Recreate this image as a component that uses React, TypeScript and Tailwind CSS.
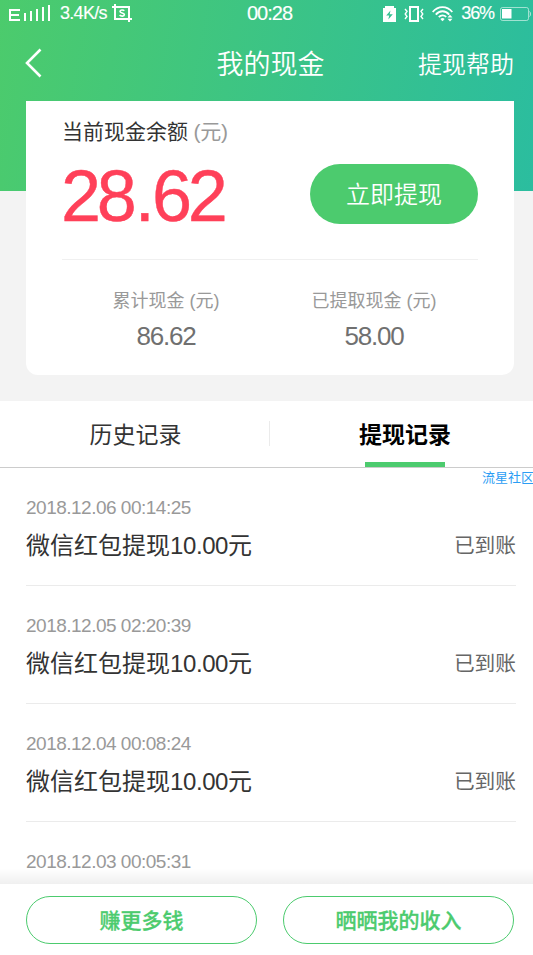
import { ReactNode } from "react";

type Entry = { time: string; title?: string; amount?: string; status?: string };

const records: Entry[] = [
  { time: "2018.12.06 00:14:25", title: "微信红包提现", amount: "10.00", status: "已到账" },
  { time: "2018.12.05 02:20:39", title: "微信红包提现", amount: "10.00", status: "已到账" },
  { time: "2018.12.04 00:08:24", title: "微信红包提现", amount: "10.00", status: "已到账" },
  { time: "2018.12.03 00:05:31" },
];

function SignalIcon() {
  return (
    <svg width="42" height="17" viewBox="0 0 42 17" shapeRendering="crispEdges">
      <path
        d="M11 5H1v10h10M1 10h9M16 16V8M22 16V6M28 16V4M34 16V2M40 16V0"
        fill="none"
        stroke="#fff"
        strokeWidth="2"
      />
    </svg>
  );
}

function CropIcon() {
  return (
    <svg width="20" height="19" viewBox="0 0 20 19" fill="none" stroke="#fff">
      <path d="M0 3h17v15M3 0v15h17" strokeWidth="2" />
      <path
        d="M12.300 6.800C11.300 5.600 8 5.600 8 7.500s4.400 1.100 4.400 3.100-3.600 1.900-4.800.5"
        strokeWidth="1.600"
      />
    </svg>
  );
}

function ChargeIcon() {
  return (
    <svg width="13" height="16" viewBox="0 0 13 16">
      <path d="M2 0h9v2h2v14H0V2h2z" fill="#fff" />
      <path d="M7.500 4.500 3.200 9.500h3L5.300 13.500 9.800 8.200H6.700z" fill="#35c192" />
    </svg>
  );
}

function VibrateIcon() {
  return (
    <svg width="20" height="16" viewBox="0 0 20 16" fill="none" stroke="#fff">
      <path d="M6 1h8v14H6z" strokeWidth="2" />
      <path
        d="M1 3l2 2.300L1.200 8 3 10.500 1 13M19 3l-2 2.300L18.800 8 17 10.500 19 13"
        strokeWidth="1.400"
      />
    </svg>
  );
}

function WifiIcon() {
  return (
    <svg width="22" height="16" viewBox="0 0 22 16" fill="none" stroke="#fff">
      <path
        d="M.7 6C6-.6 15-.6 20.300 6M3.800 8.600c3.700-4.500 9.700-4.500 13.400 0M6.800 11.200c2.200-2.500 5.200-2.500 7.400-.3"
        strokeWidth="1.800"
      />
      <path d="M8.300 13c1.500-1.200 2.900-1.200 4.400 0l-2.200 2.300z" fill="#fff" stroke="none" />
      <path d="M15.500 11.400h5L18 8.800zM15.500 12.800h5L18 15.400z" fill="#fff" stroke="none" />
    </svg>
  );
}

function BatteryIcon() {
  return (
    <svg width="31" height="14" viewBox="0 0 31 14">
      <rect x=".5" y=".5" width="28" height="13" rx="2" fill="none" stroke="#fff" strokeOpacity=".55" />
      <path d="M29.500 4.500c1.200.8 1.200 4.200 0 5" fill="none" stroke="#fff" strokeOpacity=".7" />
      <path d="M2 2h9.500v9.500H2z" fill="#fff" />
    </svg>
  );
}

function StatusBar() {
  return (
    <div className="relative flex h-[27px] items-center justify-between pl-[9px] pr-0.5 text-lg leading-[27px]">
      <div className="flex items-center">
        <SignalIcon />
        <span className="ml-[9px] tracking-[-0.7px] [-webkit-text-stroke:0.15px]">3.4K/s</span>
        <span className="ml-[5px]">
          <CropIcon />
        </span>
      </div>
      <span className="absolute left-[247px] top-0 text-xl leading-[27px] tracking-[-1px] [-webkit-text-stroke:0.15px]">
        00:28
      </span>
      <div className="flex items-center">
        <ChargeIcon />
        <span className="ml-2">
          <VibrateIcon />
        </span>
        <span className="ml-2">
          <WifiIcon />
        </span>
        <span className="ml-[7px] mr-1.5 tracking-[-1.1px] [-webkit-text-stroke:0.15px]">36%</span>
        <BatteryIcon />
      </div>
    </div>
  );
}

function Total({ label, value }: { label: string; value: string }) {
  return (
    <div className="flex flex-1 flex-col items-center">
      <span className="text-lg leading-6 text-[#999]">{label}</span>
      <span className="mt-[3px] text-[26px] leading-10 tracking-[-1.2px] text-[#707070]">{value}</span>
    </div>
  );
}

function OutlineButton({ children }: { children: ReactNode }) {
  return (
    <button className="h-12 flex-1 rounded-full border border-[#4ccb6e] pt-0.5 text-[21px] font-medium leading-8 text-[#4ccb6e] [-webkit-text-stroke:0.3px]">
      {children}
    </button>
  );
}

export default function App() {
  return (
    <div className="relative flex h-[955px] w-[533px] flex-col overflow-hidden bg-white font-['Liberation_Sans','Noto_Sans_CJK_SC',sans-serif] text-[#333]">
      <section className="h-[401px] shrink-0 bg-[#f3f3f3]">
        <header className="h-[191px] bg-[linear-gradient(100deg,#4ccb6c_0%,#2bbd9f_100%)] text-white">
          <StatusBar />
          <div className="grid h-[74px] grid-cols-3 items-center pl-[25px] pr-[19px]">
            <svg className="mb-0.5" width="18" height="30" viewBox="0 0 18 30" fill="none" stroke="#fff">
              <path d="M15.500 1.500 2 15l13.500 13.500" strokeWidth="2.600" />
            </svg>
            <h1 className="whitespace-nowrap pt-[3px] pl-0.5 text-center text-[27px] font-[350]">我的现金</h1>
            <span className="pt-0.5 text-right text-2xl font-[350]">提现帮助</span>
          </div>
        </header>

        {/* balance card */}
        <div className="relative ml-[26px] -mt-[90px] mr-[19px] h-[274px] rounded-b-xl bg-white px-9">
          <div className="flex h-[158px] items-start justify-between">
            <div>
              <p className="pt-[15px] text-[21px] leading-8">
                当前现金余额<span className="tracking-[-0.3px] text-[#999]"> (元)</span>
              </p>
              <p className="-ml-px mt-[13px] text-[72px] leading-[70px] tracking-[-4.4px] text-[#ff4059] [-webkit-text-stroke:0.4px]">
                28<span className="ml-[2.5px] tracking-[-2.8px]">.</span>62
              </p>
            </div>
            <button className="mt-[63px] h-[60px] w-[168px] rounded-full bg-[#4ccb6e] pt-0.5 text-2xl font-[350] text-white">
              立即提现
            </button>
          </div>
          <div className="flex border-t border-[#f0f0f0] pt-[29px]">
            <Total label="累计现金 (元)" value="86.62" />
            <Total label="已提取现金 (元)" value="58.00" />
          </div>
        </div>
      </section>

      <nav className="flex h-[67px] shrink-0 border-b border-[#ccc] text-[23px]">
        <div className="w-[269px] pl-0.5 text-center leading-[68px]">历史记录</div>
        <div className="mt-5 h-[25px] w-px bg-[#ebebeb]" />
        <div className="flex h-[66px] flex-1 flex-col items-center pl-[7px] font-bold text-black">
          <span className="h-[61px] leading-[68px]">提现记录</span>
          <span className="h-[5px] w-20 shrink-0 bg-[#4ccb6e]" />
        </div>
      </nav>

      <span className="absolute left-[482px] top-[469px] whitespace-nowrap text-[13px] leading-[18px] text-[#2b9df4]">
        流星社区
      </span>

      <ul className="min-h-0 flex-1 overflow-hidden pl-[26px] pr-[17px]">
        {records.map((r) => (
          <li key={r.time} className="h-[118px] border-b border-[#ebebeb] pt-[26px]">
            <p className="text-[19px] leading-7 tracking-[-0.5px] text-[#999]">{r.time}</p>
            {r.title && (
              <div className="flex items-center justify-between leading-[48px]">
                <span className="text-2xl">
                  {r.title}
                  <span className="tracking-[-0.4px]">{r.amount}</span>元
                </span>
                <span className="text-[20.7px] text-[#666]">{r.status}</span>
              </div>
            )}
          </li>
        ))}
      </ul>

      <footer className="relative flex h-[71px] shrink-0 gap-[26px] bg-white pl-[26px] pr-[19px] pt-3">
        <div className="absolute inset-x-0 -top-4 h-4 bg-linear-to-t from-black/6 to-transparent" />
        <OutlineButton>赚更多钱</OutlineButton>
        <OutlineButton>晒晒我的收入</OutlineButton>
      </footer>
    </div>
  );
}
